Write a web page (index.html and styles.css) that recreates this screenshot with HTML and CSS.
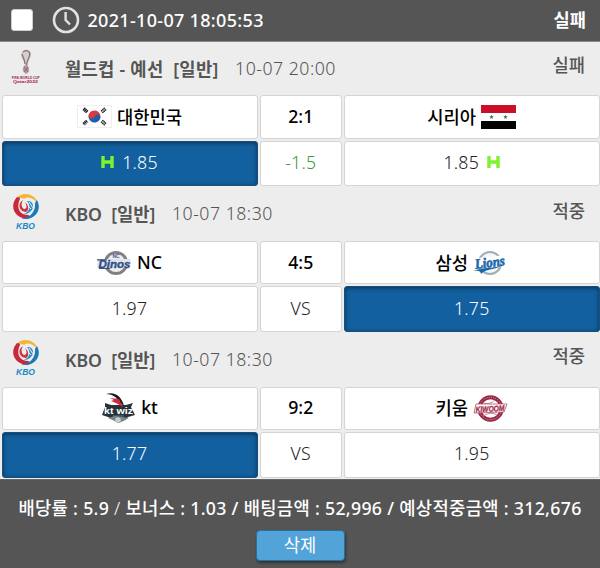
FILE: index.html
```
<!DOCTYPE html>
<html lang="ko">
<head>
    <meta charset="UTF-8">
    <meta name="viewport" content="width=device-width, initial-scale=1.0">
    <title>배팅내역</title>
    <link rel="stylesheet" href="styles.css">
</head>
<body>
    <svg class="defs" width="0" height="0">
        <symbol id="kbo" viewBox="0 0 30 38">
            <path d="M4 9C6-2 24-2 27 11C23 5 17 3 13 6C10 4 7 5 4 9Z" fill="#f2b632"/>
            <path d="M6 4C-2 13 3 25 16 26C20 25 19 22 17 22C8 22 5 14 9 6C9 5 8 4 6 4Z" fill="#c8283c"/>
            <path d="M26 7C32 18 22 29 10 25C18 26 25 19 24 10Z" fill="#1b79b4"/>
            <path d="M12 7C6 10 8 19 15 19C19 17 17 11 14 9C17 14 15 16 13 16C10 14 10 10 12 7Z" fill="#cf3440"/>
            <path d="M16 8C22 7 24 14 20 18C17 21 14 21 13 21C19 18 20 13 16 8Z" fill="#338fc8"/>
            <path d="M18 9L22 15M17 13L20 16" stroke="#eee" stroke-width="1"/>
            <text x="5" y="36" textLength="19" lengthAdjust="spacingAndGlyphs" class="kbo-text">KBO</text>
        </symbol>
        <symbol id="handicap" viewBox="0 0 13 12">
            <path d="M2 0V12M11 0V12M2 6H11" stroke="#7df32b" stroke-width="3.4"/>
        </symbol>
    </svg>

    <div class="bet-head">
        <span class="checkbox"></span>
        <svg class="clock" width="28" height="28" viewBox="0 0 28 28">
            <circle cx="14" cy="14" r="12" fill="none" stroke="#e2e2e2" stroke-width="2.6"/>
            <path d="M13.6 6V14L18 18.5" fill="none" stroke="#e2e2e2" stroke-width="2.4"/>
        </svg>
        <span class="bet-time">2021-10-07 18:05:53</span>
        <span class="bet-status">실패</span>
    </div>

    <div class="match">
        <div class="match-head">
            <svg class="league" width="30" height="38" viewBox="0 0 30 38">
                <path d="M10 7C10 0 21 0 20 7C20 11 16 13 16.5 19H14C14 13 10 11 10 7Z" fill="#d5cfcc"/>
                <path d="M12 4C16 1 20 4 18.5 8C17 12 15 14 15.5 19M11 6C12 10 14 12 14 16" fill="none" stroke="#80706f" stroke-width="1.2"/>
                <path d="M14 17C10 21 12 24 15 26C19 24 19 20 16 17Z" fill="#b59a9e"/>
                <path d="M13 19L17 24M17 19L13 24" stroke="#805966" stroke-width=".8"/>
                <text x=".8" y="31.2" textLength="28" lengthAdjust="spacingAndGlyphs" class="wc-text">FIFA WORLD CUP</text>
                <text x="2" y="35.2" textLength="25" lengthAdjust="spacingAndGlyphs" class="wc-text">Qatar2022</text>
            </svg>
            <span class="title wc">월드컵 - 예선&nbsp; [일반]</span>
            <span class="date">10-07 20:00</span>
            <span class="result">실패</span>
        </div>
        <div class="grid">
            <div class="cell team">
                <svg width="35" height="23" viewBox="0 0 35 23">
                    <rect x=".5" y=".5" width="34" height="22" fill="#fff" stroke="#eee"/>
                    <g transform="rotate(20 17.5 11.5)">
                        <path d="M11.5 11.5A6 6 0 0 1 23.5 11.5Z" fill="#d83a3f"/>
                        <path d="M11.5 11.5A6 6 0 0 0 23.5 11.5Z" fill="#1f5fa8"/>
                        <circle cx="14.5" cy="11.5" r="3" fill="#d83a3f"/>
                        <circle cx="20.5" cy="11.5" r="3" fill="#1f5fa8"/>
                    </g>
                    <g stroke="#222" stroke-width="1.4">
                        <path d="M6 5.5L8.3 2.8M7.3 6.7L9.6 4M8.6 7.9L10.9 5.2"/>
                        <path d="M29 5.5L26.7 2.8M27.7 6.7L25.4 4M26.4 7.9L24.1 5.2" stroke-dasharray="1.6 .5"/>
                        <path d="M6 17.5L8.3 20.2M7.3 16.3L9.6 19M8.6 15.1L10.9 17.8" stroke-dasharray="2.6 .5"/>
                        <path d="M29 17.5L26.7 20.2M27.7 16.3L25.4 19M26.4 15.1L24.1 17.8" stroke-dasharray="1.6 .5"/>
                    </g>
                </svg>
                <span>대한민국</span>
            </div>
            <div class="cell score">2:1</div>
            <div class="cell team">
                <span>시리아</span>
                <svg width="35" height="24" viewBox="0 0 35 24">
                    <path d="M0 0H35V8H0Z" fill="#ca1029"/>
                    <path d="M0 8H35V16H0Z" fill="#fff"/>
                    <path d="M0 16H35V24H0Z" fill="#000"/>
                    <path id="star" d="M10.5 9.5L11 11.2H12.8L11.4 12.2L11.9 14L10.5 12.9L9.1 14L9.6 12.2L8.2 11.2H10Z" fill="#16794a"/>
                    <use href="#star" x="14"/>
                </svg>
            </div>
            <div class="cell odds picked"><svg width="13" height="12"><use href="#handicap"/></svg><span>1.85</span></div>
            <div class="cell odds line">-1.5</div>
            <div class="cell odds"><span>1.85</span><svg width="13" height="12"><use href="#handicap"/></svg></div>
        </div>
    </div>

    <div class="match">
        <div class="match-head">
            <svg class="league" width="30" height="38"><use href="#kbo"/></svg>
            <span class="title">KBO&nbsp; [일반]</span>
            <span class="date">10-07 18:30</span>
            <span class="result">적중</span>
        </div>
        <div class="grid">
            <div class="cell team">
                <svg width="35" height="26" viewBox="0 0 35 26">
                    <circle cx="19" cy="13" r="10.6" fill="#eee" stroke="#85807f" stroke-width="3"/>
                    <text x="15.5" y="7.7" class="nc-small">NC</text>
                    <path d="M1 9.5L9 9L34 9L33 17L22 18L3 18L0 17Z" fill="#dfe5ef"/>
                    <text x="1.5" y="17.7" textLength="32" lengthAdjust="spacingAndGlyphs" class="dinos">Dinos</text>
                    <path d="M0 9.8H10M2 18.5H13" stroke="#315083" stroke-width="1.2"/>
                </svg>
                <span>NC</span>
            </div>
            <div class="cell score">4:5</div>
            <div class="cell team">
                <span>삼성</span>
                <svg width="35" height="26" viewBox="0 0 35 26">
                    <circle cx="17" cy="13" r="11" fill="#f5f8fa" stroke="#a5adb3" stroke-width="2.2"/>
                    <path d="M1 17L5 8L33 5L32 13L24 17L5 22Z" fill="#fff"/>
                    <g transform="rotate(-7 17 14)">
                        <text x="2" y="17" textLength="30" lengthAdjust="spacingAndGlyphs" class="lions">Lions</text>
                    </g>
                    <path d="M0 21C10 17 22 18 28 16C22 20 14 18 8 24C8 21 5 20 0 21Z" fill="#1967a9"/>
                </svg>
            </div>
            <div class="cell odds">1.97</div>
            <div class="cell odds">VS</div>
            <div class="cell odds picked">1.75</div>
        </div>
    </div>

    <div class="match">
        <div class="match-head">
            <svg class="league" width="30" height="38"><use href="#kbo"/></svg>
            <span class="title">KBO&nbsp; [일반]</span>
            <span class="date">10-07 18:30</span>
            <span class="result">적중</span>
        </div>
        <div class="grid">
            <div class="cell team">
                <svg width="35" height="32" viewBox="0 0 35 32">
                    <path d="M4 11L10 13H25L32 11L30 15L34 23L27 25L24 28L17 31L11 27L7 25L1 23L4 15Z" fill="#26333a"/>
                    <path d="M7 26L14 24L21 25L28 26L18 31Z" fill="#78868b"/>
                    <path d="M5 2C14-1 21 5 23 14L18 10C16 5 11 2 5 2Z" fill="#191b20"/>
                    <path d="M9 6L18 7L22 15L15 11L10 9L13 8Z" fill="#d3283c"/>
                    <circle cx="17" cy="28" r="2.8" fill="#c7cccf"/>
                    <text x="3" y="21.5" textLength="29" lengthAdjust="spacingAndGlyphs" class="wiz">kt wiz</text>
                    <path d="M12 24H23" stroke="#8e999e" stroke-width="1.2" stroke-dasharray="1 .6"/>
                </svg>
                <span>kt</span>
            </div>
            <div class="cell score">9:2</div>
            <div class="cell team">
                <span>키움</span>
                <svg width="35" height="27" viewBox="0 0 35 27">
                    <circle cx="17.5" cy="13.5" r="11.2" fill="#fff" stroke="#962744" stroke-width="4"/>
                    <circle cx="17.5" cy="13.5" r="11.2" fill="none" stroke="#d89aaa" stroke-width=".9" stroke-dasharray="1.2 1"/>
                    <path d="M10 8Q17 10 22 5M10 21Q18 16 24 20" fill="none" stroke="#c88b9a"/>
                    <path d="M3 9L34 9L31 17L1 18Z" fill="#fff" stroke="#b0506a" stroke-width=".8"/>
                    <g transform="rotate(-3 17 14)">
                        <text x="2.5" y="16.6" textLength="29" lengthAdjust="spacingAndGlyphs" class="kiwoom">KIWOOM</text>
                    </g>
                </svg>
            </div>
            <div class="cell odds picked">1.77</div>
            <div class="cell odds">VS</div>
            <div class="cell odds">1.95</div>
        </div>
    </div>

    <div class="bet-foot">
        <p class="summary">배당률 : 5.9 <span class="thin">/</span> 보너스 : 1.03 / 배팅금액 : 52,996 / 예상적중금액 : 312,676</p>
        <button>삭제</button>
    </div>
</body>
</html>
```
FILE: styles.css
```
* {
    box-sizing: border-box;
}
body {
    font-family: "Noto Sans", "Noto Sans CJK KR", sans-serif;
    font-size: 17.7px;
    background: #555555;
    margin: 0;
    height: 568px;
    overflow: hidden;
}
svg {
    overflow: visible;
}
.defs {
    display: none;
}
.bet-head {
    display: flex;
    align-items: center;
    height: 42px;
    padding: 0 14px 2px 11px;
    border-bottom: 1px solid #888888;
    color: #FFFFFF;
}
.checkbox {
    width: 22px;
    height: 22px;
    background: #FFFFFF;
    border: 1px solid #cccccc;
    border-radius: 3px;
}
.clock {
    margin: 0 8px 0 18.5px;
}
.bet-time {
    font-size: 18px;
    font-weight: 500;
    letter-spacing: 0.32px;
}
.bet-status {
    margin: -1px 0 0 auto;
    font-weight: 600;
}
.match {
    height: 145.67px;
    background: #ededed;
}
.match-head {
    display: flex;
    align-items: center;
    height: 53.3px;
    padding: 0 15px 2px 11px;
    color: #555555;
}
.league {
    margin-top: -2px;
}
.title {
    margin-left: 24px;
    font-weight: 600;
    white-space: nowrap;
}
.wc {
    letter-spacing: 0.28px;
}
.date {
    margin-left: 16.5px;
    font-weight: 300;
    letter-spacing: 0.5px;
}
.result {
    margin: -7px 0 0 auto;
    font-weight: 500;
}
.grid {
    display: grid;
    grid-template-columns: 256px 82.5px 255.5px;
    grid-template-rows: 43.4px 45.7px;
    gap: 2px;
    padding-left: 1.5px;
}
.cell {
    display: flex;
    align-items: center;
    justify-content: center;
    background: #FFFFFF;
    border: 1px solid #d4d4d4;
    border-radius: 3px;
    padding-bottom: 2px;
    color: #000000;
}
.team, .score {
    font-weight: 500;
}
.team {
    gap: 5px;
}
.team svg {
    position: relative;
    top: 1px;
}
.odds {
    gap: 8px;
    padding-bottom: 3px;
    font-weight: 300;
    letter-spacing: 0.25px;
    color: #222222;
}
.line {
    color: #3d9a3d;
}
.picked {
    background: #12609f;
    border-color: #174f80;
    box-shadow: inset 0 1px 4px rgba(0, 0, 0, 0.5);
    color: #FFFFFF;
}
.bet-foot {
    display: flex;
    flex-direction: column;
    align-items: center;
    height: 89px;
    border-top: 1px solid #666666;
    color: #FFFFFF;
}
.summary {
    margin: 14px 0 0;
    height: 36px;
    font-weight: 500;
    letter-spacing: 0.32px;
    white-space: nowrap;
}
.thin {
    font-weight: 300;
}
button {
    width: 89px;
    height: 31px;
    padding: 0 0 2px;
    background: #52a3d8;
    border: 1px solid #2b6f9f;
    border-radius: 4px;
    box-shadow: 1px 2px 3px rgba(0, 0, 0, 0.4);
    color: #FFFFFF;
    font: 400 17.7px "Noto Sans", "Noto Sans CJK KR", sans-serif;
}
.kbo-text {
    font: italic bold 9.5px "Liberation Sans", sans-serif;
    fill: #168bc8;
}
.wc-text {
    font: bold 4px "Liberation Sans", sans-serif;
    fill: #a3194b;
}
.nc-small {
    font: bold 5px "Liberation Sans", sans-serif;
    fill: #3c5b8f;
}
.dinos {
    font: italic bold 11px "Liberation Sans", sans-serif;
    fill: #315083;
    stroke: #315083;
    stroke-width: 0.4;
}
.lions {
    font: italic bold 14px "Liberation Serif", serif;
    fill: #1967a9;
    stroke: #1967a9;
    stroke-width: 0.6;
}
.wiz {
    font: bold 9px "Liberation Sans", sans-serif;
    fill: #FFFFFF;
}
.kiwoom {
    font: italic bold 8px "Liberation Sans", sans-serif;
    fill: #a52b4c;
    stroke: #a52b4c;
    stroke-width: 0.3;
}
```
